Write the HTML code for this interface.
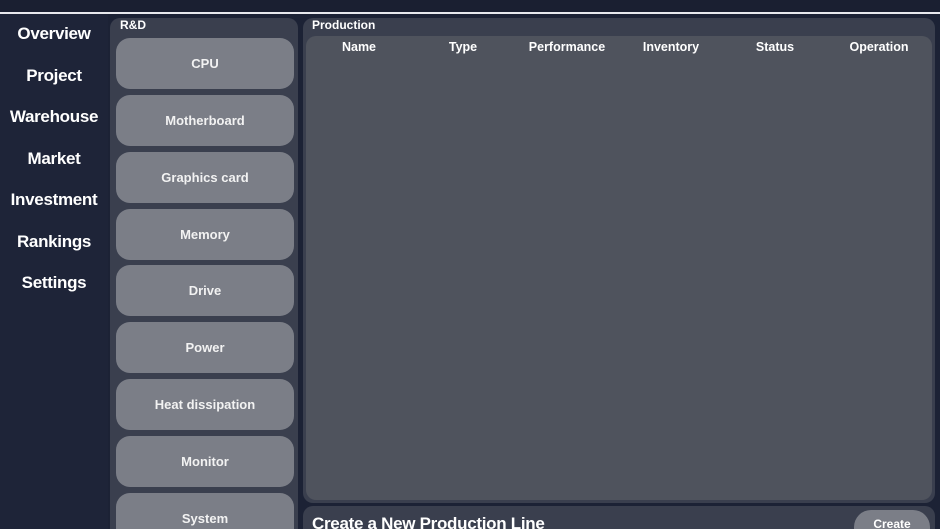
<!DOCTYPE html>
<html style="width:940px;height:529px;overflow:hidden"><head><style>
*{margin:0;padding:0;box-sizing:border-box}
body{width:940px;height:529px;overflow:hidden;background:#1c2235;font-family:"Liberation Sans",sans-serif;color:#fff;position:relative}
.top{position:absolute;left:0;top:0;width:940px;height:12px;background:#1a1f31}
.line{position:absolute;left:0;top:12px;width:940px;height:2px;background:#e8e9ee}
.side{position:absolute;left:0;top:14px;width:108px;height:515px;background:#1e2438}
.side div{position:absolute;left:0;width:108px;text-align:center;font-weight:bold;font-size:17px;letter-spacing:-0.3px}
.rd{position:absolute;left:110px;top:18px;width:188px;height:511px;background:#3a3f4e;border-radius:10px 10px 0 0}
.lbl{position:absolute;font-size:12px;font-weight:bold}
.btn{position:absolute;left:116px;width:178px;height:51px;background:#7b7e87;border-radius:14px;text-align:center;line-height:51px;font-size:13px;font-weight:bold;color:#f2f2f2}
.prod{position:absolute;left:303px;top:18px;width:632px;height:485px;background:#3a3f4e;border-radius:10px}
.tbl{position:absolute;left:306px;top:36px;width:626px;height:464px;background:#4f535d;border-radius:10px}
.th{position:absolute;top:40px;font-size:12.5px;font-weight:bold;text-align:center;width:100px}
.cr{position:absolute;left:303px;top:506px;width:632px;height:23px;background:#3a3f4e;border-radius:10px 10px 0 0}
.crb{position:absolute;left:854px;top:510px;width:76px;height:19px;background:#7b7e87;border-radius:17px 17px 0 0;font-size:12px;font-weight:bold;text-align:center;padding-top:7px}
</style></head><body>
<div class="top"></div><div class="line"></div>
<div class="side">
<div style="top:10px">Overview</div>
<div style="top:52px">Project</div>
<div style="top:93px">Warehouse</div>
<div style="top:135px">Market</div>
<div style="top:176px">Investment</div>
<div style="top:218px">Rankings</div>
<div style="top:259px">Settings</div>
</div>
<div class="rd"></div>
<div class="lbl" style="left:120px;top:18px">R&amp;D</div>
<div class="btn" style="top:38px">CPU</div>
<div class="btn" style="top:95px">Motherboard</div>
<div class="btn" style="top:152px">Graphics card</div>
<div class="btn" style="top:209px">Memory</div>
<div class="btn" style="top:265px">Drive</div>
<div class="btn" style="top:322px">Power</div>
<div class="btn" style="top:379px">Heat dissipation</div>
<div class="btn" style="top:436px">Monitor</div>
<div class="btn" style="top:493px;height:36px;border-radius:14px 14px 0 0;line-height:51px">System</div>
<div class="prod"></div>
<div class="lbl" style="left:312px;top:18px">Production</div>
<div class="tbl"></div>
<div class="th" style="left:309px">Name</div>
<div class="th" style="left:413px">Type</div>
<div class="th" style="left:517px">Performance</div>
<div class="th" style="left:621px">Inventory</div>
<div class="th" style="left:725px">Status</div>
<div class="th" style="left:829px">Operation</div>
<div class="cr"></div>
<div style="position:absolute;left:312px;top:514px;font-size:17px;font-weight:bold;letter-spacing:-0.3px">Create a New Production Line</div>
<div class="crb">Create</div>
</body></html>
